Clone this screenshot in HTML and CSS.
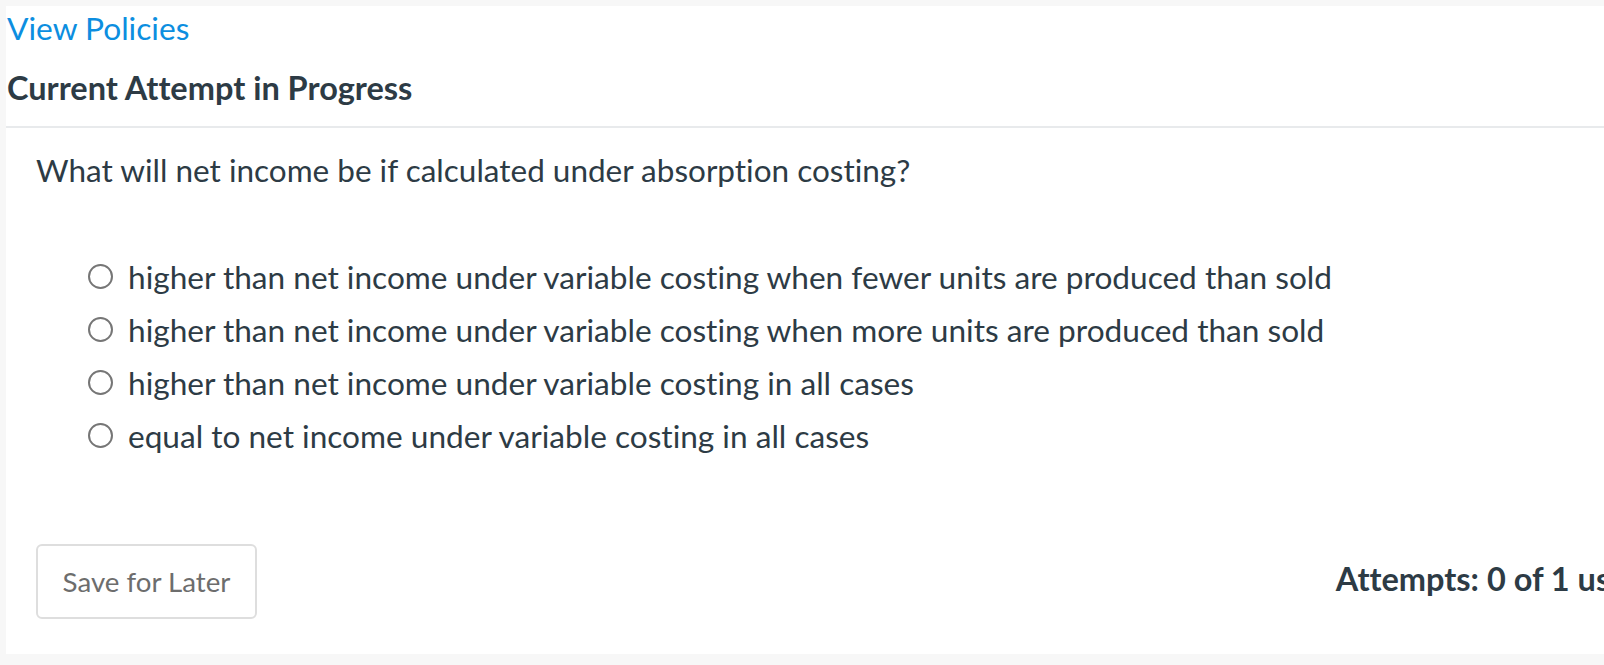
FILE: index.html
```html
<!DOCTYPE html>
<html>
<head>
<meta charset="utf-8">
<link rel="stylesheet" href="styles.css">
</head>
<body>
<div class="panel">
  <div class="header">
    <a class="policies" href="#">View Policies</a>
    <h2 class="title">Current Attempt in Progress</h2>
  </div>
  <div class="body">
    <p class="question">What will net income be if calculated under absorption costing?</p>
    <ul class="options">
      <li class="option"><span class="radio"></span><span>higher than net income under variable costing when fewer units are produced than sold</span></li>
      <li class="option"><span class="radio"></span><span>higher than net income under variable costing when more units are produced than sold</span></li>
      <li class="option"><span class="radio"></span><span>higher than net income under variable costing in all cases</span></li>
      <li class="option"><span class="radio"></span><span>equal to net income under variable costing in all cases</span></li>
    </ul>
    <div class="footer">
      <button class="save">Save for Later</button>
      <div class="attempts">Attempts: 0 of 1 used</div>
    </div>
  </div>
</div>
</body>
</html>
```

FILE: styles.css
```css
html, body {
  margin: 0;
  padding: 0;
  background: #f7f7f7;
  overflow: hidden;
  width: 1604px;
  height: 665px;
}
body {
  font-family: Lato, "Open Sans", sans-serif;
  color: #2d3b45;
  font-variant-ligatures: none;
}
.panel {
  margin: 6px 0 0 6px;
  width: 1640px;
  height: 648px;
  background: #fff;
  box-sizing: border-box;
}
.header {
  padding: 0 0 0 1px;
  border-bottom: 2px solid #e8eaec;
  height: 120px;
  box-sizing: content-box;
}
.policies {
  display: block;
  color: #0c8ee0;
  text-decoration: none;
  font-size: 31.7px;
  line-height: 44px;
}
.title {
  margin: 0;
  padding-top: 16px;
  font-size: 32.5px;
  font-weight: 700;
  line-height: 44px;
}
.body {
  padding: 0 0 0 30px;
}
.question {
  margin: 0;
  padding-top: 20px;
  font-size: 31.5px;
  line-height: 44px;
}
.options {
  list-style: none;
  margin: 0;
  padding: 58px 0 0 52px;
}
.option {
  display: flex;
  align-items: center;
  gap: 15px;
  font-size: 31.6px;
  height: 53px;
}
.radio {
  width: 25px;
  height: 25px;
  border: 2px solid #767676;
  border-radius: 50%;
  flex: none;
  box-sizing: border-box;
}
.footer {
  display: flex;
  align-items: center;
  justify-content: space-between;
  margin-top: 82px;
}
.save {
  font-family: Lato, "Open Sans", sans-serif;
  font-size: 27.7px;
  color: #6d6d6d;
  background: #fff;
  border: 2px solid #dedede;
  border-radius: 6px;
  width: 221px;
  height: 75px;
  padding: 0;
  font-variant-ligatures: none;
}
.attempts {
  font-size: 32.5px;
  font-weight: 700;
  margin-bottom: 7px;
}
```
